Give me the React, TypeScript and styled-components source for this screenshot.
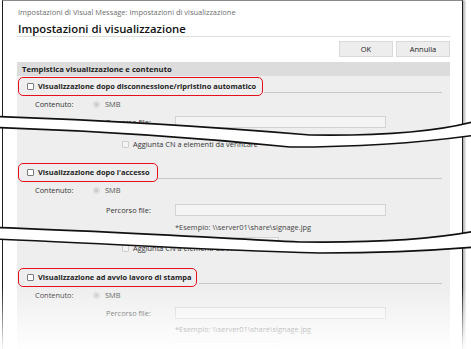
import React from 'react';
import styled, { createGlobalStyle } from 'styled-components';

const GlobalStyle = createGlobalStyle`
  html, body {
    margin: 0;
    padding: 0;
    background: #fff;
  }
  body {
    font-family: 'Open Sans', 'Noto Sans', sans-serif;
  }
`;

const tears = [
  {
    top: 'M -5 116.5 C 100 120, 200 126, 310 135 C 380 136, 440 131, 476 121',
    bottom: 'M -5 127.5 C 100 131, 200 138, 290 147 C 380 147, 440 140, 476 135',
    band:
      'M -5 116.5 C 100 120, 200 126, 310 135 C 380 136, 440 131, 476 121 L 476 135 C 440 140, 380 147, 290 147 C 200 138, 100 131, -5 127.5 Z',
  },
  {
    top: 'M -5 227.5 C 100 231, 200 237, 300 242 C 380 243, 440 238, 476 231',
    bottom: 'M -5 239 C 100 243, 200 250, 320 253 C 400 253, 440 250, 476 247',
    band:
      'M -5 227.5 C 100 231, 200 237, 300 242 C 380 243, 440 238, 476 231 L 476 247 C 440 250, 400 253, 320 253 C 200 250, 100 243, -5 239 Z',
  },
];

const App: React.FC = () => {
  return (
    <Stage>
      <GlobalStyle />
      <Window>
        <Breadcrumb>Impostazioni di Visual Message: Impostazioni di visualizzazione</Breadcrumb>
        <Title>Impostazioni di visualizzazione</Title>
        <ButtonBar>
          <Button>OK</Button>
          <Button>Annulla</Button>
        </ButtonBar>
        <SectionHeader>Tempistica visualizzazione e contenuto</SectionHeader>
        <Panel>
          <CheckRow>
            <Highlight>
              <Checkbox />
              <BoldLabel>Visualizzazione dopo disconnessione/ripristino automatico</BoldLabel>
            </Highlight>
            <Rule />
          </CheckRow>
          <FieldRow $mt={1} $indent={8}>
            <FieldLabel $width={58}>Contenuto:</FieldLabel>
            <Radio />
            <RadioText>SMB</RadioText>
          </FieldRow>
          <FieldRow $indent={79}>
            <FieldLabel $width={69}>Percorso file:</FieldLabel>
            <Input $width={211} />
          </FieldRow>

          <SubCheckRow $mt={5}>
            <Checkbox $disabled />
            <SubLabel>Aggiunta CN a elementi da verificare</SubLabel>
          </SubCheckRow>

          <CheckRow $mt={12}>
            <Highlight $right={8}>
              <Checkbox />
              <BoldLabel>Visualizzazione dopo l'accesso</BoldLabel>
            </Highlight>
            <Rule />
          </CheckRow>
          <FieldRow $mt={1} $indent={8}>
            <FieldLabel $width={58}>Contenuto:</FieldLabel>
            <Radio />
            <RadioText>SMB</RadioText>
          </FieldRow>
          <FieldRow $mt={2} $indent={79}>
            <FieldLabel $width={69}>Percorso file:</FieldLabel>
            <Input $width={211} />
          </FieldRow>
          <Example $mt={1}>*Esempio: \\server01\share\signage.jpg</Example>
          <PartialRow $mt={3}>
            <Input $width={104} />
          </PartialRow>

          <SubCheckRow $mt={3}>
            <Checkbox $disabled />
            <SubLabel>Aggiunta CN a elementi da verificare</SubLabel>
          </SubCheckRow>

          <CheckRow $mt={13}>
            <Highlight $right={6}>
              <Checkbox />
              <BoldLabel>Visualizzazione ad avvio lavoro di stampa</BoldLabel>
            </Highlight>
            <Rule />
          </CheckRow>
          <FieldRow $mt={1} $indent={8}>
            <FieldLabel $width={58}>Contenuto:</FieldLabel>
            <Radio />
            <RadioText>SMB</RadioText>
          </FieldRow>
          <FieldRow $indent={79}>
            <FieldLabel $width={69}>Percorso file:</FieldLabel>
            <Input $width={211} />
          </FieldRow>
          <Example>*Esempio: \\server01\share\signage.jpg</Example>
          <PartialRow $mt={5}>
            <Input $width={104} />
          </PartialRow>
        </Panel>
      </Window>

      <TearLayer width='471' height='349' viewBox='0 0 471 349'>
        {tears.map((t, i) => (
          <g key={i}>
            <path d={t.band} fill='#fff' />
            <path d={t.top} fill='none' stroke='#111' strokeWidth='1.6' />
            <path d={t.bottom} fill='none' stroke='#111' strokeWidth='1.6' />
          </g>
        ))}
      </TearLayer>
      <BottomFade />
    </Stage>
  );
};

const Stage = styled.div`
  position: relative;
  width: 471px;
  height: 349px;
  overflow: hidden;
  background: #fff;
`;

const Window = styled.div`
  box-sizing: border-box;
  margin-left: 2px;
  width: 461px;
  height: 360px;
  padding: 0 12px 0 14px;
  border: 1px solid #1e1e1e;
  border-top-color: #8a8a8a;
  border-bottom: none;
  background: #fff;
  box-shadow: 2px 0 2px rgba(0, 0, 0, 0.3);
  display: flex;
  flex-direction: column;
`;

const Breadcrumb = styled.div`
  padding: 5px 0 0 1px;
  height: 12px;
  line-height: 12px;
  font-size: 7.45px;
  color: #6e6e6e;
  white-space: nowrap;
`;

const Title = styled.div`
  margin-top: 4px;
  padding-left: 1px;
  height: 14px;
  line-height: 14px;
  font-size: 11.3px;
  font-weight: 600;
  color: #111;
  border-bottom: 1px solid #dedede;
`;

const ButtonBar = styled.div`
  display: flex;
  justify-content: flex-end;
  gap: 3px;
  margin-top: 4px;
`;

const Button = styled.div`
  box-sizing: border-box;
  width: 54px;
  height: 16px;
  display: flex;
  align-items: center;
  justify-content: center;
  background: #ededed;
  border: 1px solid #d9d9d9;
  font-size: 7.5px;
  color: #222;
`;

const SectionHeader = styled.div`
  margin-top: 5px;
  height: 14px;
  line-height: 14px;
  padding-left: 5px;
  background: #dcdcdc;
  font-size: 7.7px;
  font-weight: 700;
  color: #1c1c1c;
`;

const Panel = styled.div`
  flex: 1;
  display: flex;
  flex-direction: column;
  padding: 2px 8px 0 10px;
  background: #eeeeee;
`;

const CheckRow = styled.div<{ $mt?: number }>`
  display: flex;
  align-items: center;
  height: 16px;
  margin-top: ${(p) => p.$mt ?? 0}px;
`;

const Highlight = styled.span<{ $right?: number }>`
  position: relative;
  display: inline-flex;
  align-items: center;
  &::after {
    content: '';
    position: absolute;
    top: -4px;
    bottom: -5px;
    left: -9px;
    right: -${(p) => p.$right ?? 7}px;
    border: 1.5px solid #e5101c;
    border-radius: 5px;
  }
`;

const Checkbox = styled.span<{ $disabled?: boolean }>`
  box-sizing: border-box;
  display: inline-block;
  width: 7px;
  height: 7px;
  flex: none;
  border: 1px solid ${(p) => (p.$disabled ? '#cdcdcd' : '#7a7a7a')};
  background: ${(p) => (p.$disabled ? '#f3f3f3' : '#fff')};
  border-radius: 1px;
`;

const BoldLabel = styled.span`
  margin-left: 4px;
  font-size: 7.45px;
  font-weight: 700;
  color: #1e1e1e;
  white-space: nowrap;
`;

const Rule = styled.div`
  flex: 1;
  height: 1px;
  margin: 12px 0 0 8px;
  background: #c6c6c6;
`;

const FieldRow = styled.div<{ $mt?: number; $indent: number }>`
  display: flex;
  align-items: center;
  height: 18px;
  margin-top: ${(p) => p.$mt ?? 0}px;
  padding-left: ${(p) => p.$indent}px;
`;

const PartialRow = styled.div<{ $mt?: number }>`
  display: flex;
  margin-top: ${(p) => p.$mt ?? 0}px;
  margin-bottom: -12px;
  padding-left: 148px;
`;

const FieldLabel = styled.span<{ $width: number }>`
  width: ${(p) => p.$width}px;
  flex: none;
  font-size: 7.4px;
  color: #333;
  white-space: nowrap;
`;

const Radio = styled.span`
  box-sizing: border-box;
  width: 7px;
  height: 7px;
  border-radius: 50%;
  border: 1px solid #d3d3d3;
  background: radial-gradient(circle, #c9c9c9 0 1.6px, #e9e9e9 2px);
`;

const RadioText = styled.span`
  margin-left: 5px;
  font-size: 7.4px;
  color: #555;
`;

const Input = styled.span<{ $width: number }>`
  box-sizing: border-box;
  display: block;
  width: ${(p) => p.$width}px;
  height: 12px;
  background: #f4f4f4;
  border: 1px solid #d3d3d3;
`;

const SubCheckRow = styled.div<{ $mt?: number }>`
  display: flex;
  align-items: center;
  height: 16px;
  margin-top: ${(p) => p.$mt ?? 0}px;
  padding-left: 95px;
`;

const SubLabel = styled.span`
  margin-left: 4px;
  font-size: 7.4px;
  color: #333;
  white-space: nowrap;
`;

const Example = styled.div<{ $mt?: number }>`
  margin-top: ${(p) => p.$mt ?? 0}px;
  height: 14px;
  line-height: 14px;
  padding-left: 148px;
  font-size: 7.4px;
  color: #444;
  white-space: nowrap;
`;

const TearLayer = styled.svg`
  position: absolute;
  left: 0;
  top: 0;
  pointer-events: none;
`;

const BottomFade = styled.div`
  position: absolute;
  left: 0;
  right: 0;
  bottom: 0;
  height: 62px;
  background: linear-gradient(to bottom, rgba(255, 255, 255, 0), rgba(255, 255, 255, 0.97));
  pointer-events: none;
`;

export default App;
